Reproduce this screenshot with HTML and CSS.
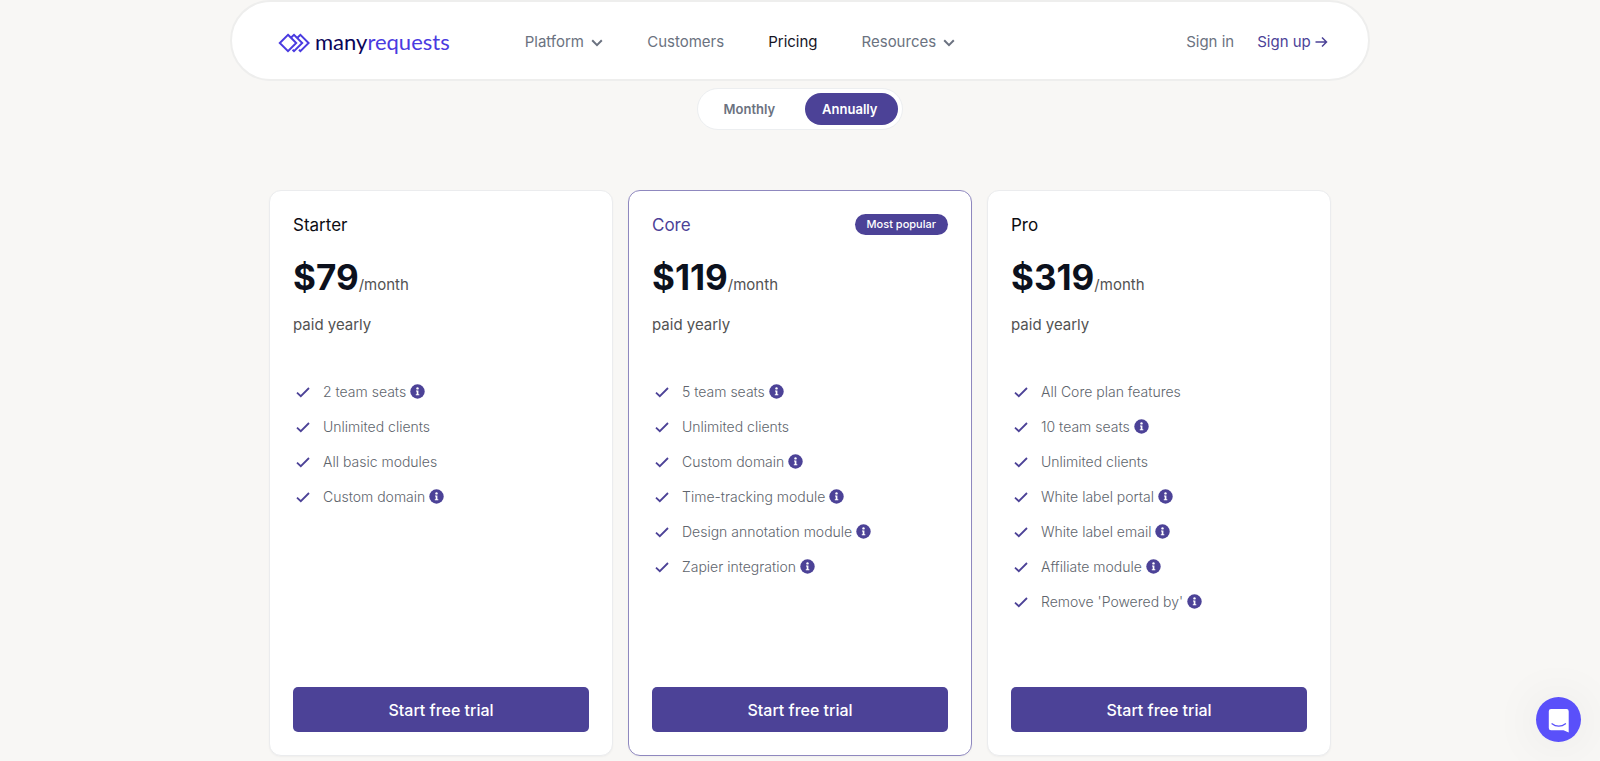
FILE: index.html
```html
<!DOCTYPE html>
<html lang="en">
<head>
    <meta charset="UTF-8">
    <meta name="viewport" content="width=device-width, initial-scale=1.0">
    <title>Pricing - ManyRequests</title>
    <link rel="stylesheet" href="styles.css">
</head>
<body>
    <!-- shared icons -->
    <svg class="sprite" aria-hidden="true">
        <symbol id="check" viewBox="0 0 14 14">
            <path d="M1 7.6 L4.8 11.2 L13 3" fill="none" stroke="#4c4297" stroke-width="1.8"/>
        </symbol>
        <symbol id="info" viewBox="0 0 15 15">
            <circle cx="7.5" cy="7.5" r="7.2" fill="#4c4297"/>
            <circle cx="7.5" cy="4.4" r="1.2" fill="#fff"/>
            <path d="M6 6.5H8.4V10.2H9.3V11.3H5.8V10.2H6.7V7.5H6Z" fill="#fff"/>
        </symbol>
        <symbol id="chevron" viewBox="0 0 12 8">
            <path d="M1.2 1.3 L6 6.1 L10.8 1.3" fill="none" stroke="#6b7280" stroke-width="2"/>
        </symbol>
    </svg>

    <header class="navbar">
        <a class="logo" href="#">
            <svg class="logo-mark" width="32" height="20" viewBox="0 0 32 20" fill="none" stroke="#4a3be0" stroke-width="2">
                <path d="M10 1.8 L18.2 10 L10 18.2 L1.8 10 Z"/>
                <path d="M12.9 4.7 L16 1.8 L24.2 10 L16 18.2 L14.6 16.8"/>
                <path d="M19.4 4.7 L22.4 1.8 L30.6 10 L22.4 18.2 L21 16.8"/>
            </svg>
            <span class="logo-text">many<span>requests</span></span>
        </a>
        <nav class="nav-links">
            <a href="#">Platform <svg width="12" height="8"><use href="#chevron"/></svg></a>
            <a href="#">Customers</a>
            <a class="current" href="#">Pricing</a>
            <a href="#">Resources <svg width="12" height="8"><use href="#chevron"/></svg></a>
        </nav>
        <div class="nav-account">
            <a href="#">Sign in</a>
            <a class="sign-up" href="#">Sign up
                <svg width="13" height="12" viewBox="0 0 13 12" fill="none" stroke="#4c4297" stroke-width="1.5"><path d="M0.5 6H11.5M7 1.5L11.5 6L7 10.5"/></svg>
            </a>
        </div>
    </header>

    <main>
        <div class="toggle">
            <input type="radio" name="billing" id="monthly">
            <label for="monthly">Monthly</label>
            <input type="radio" name="billing" id="annually" checked>
            <label for="annually">Annually</label>
        </div>

        <div class="plans">
            <section class="plan">
                <div class="plan-head"><h2>Starter</h2></div>
                <p class="price"><strong>$79</strong>/month</p>
                <p class="billed">paid yearly</p>
                <ul class="features">
                    <li><svg class="check"><use href="#check"/></svg>2 team seats<svg class="info"><use href="#info"/></svg></li>
                    <li><svg class="check"><use href="#check"/></svg>Unlimited clients</li>
                    <li><svg class="check"><use href="#check"/></svg>All basic modules</li>
                    <li><svg class="check"><use href="#check"/></svg>Custom domain<svg class="info"><use href="#info"/></svg></li>
                </ul>
                <button class="trial">Start free trial</button>
            </section>

            <section class="plan popular">
                <div class="plan-head"><h2>Core</h2><span class="badge">Most popular</span></div>
                <p class="price"><strong>$119</strong>/month</p>
                <p class="billed">paid yearly</p>
                <ul class="features">
                    <li><svg class="check"><use href="#check"/></svg>5 team seats<svg class="info"><use href="#info"/></svg></li>
                    <li><svg class="check"><use href="#check"/></svg>Unlimited clients</li>
                    <li><svg class="check"><use href="#check"/></svg>Custom domain<svg class="info"><use href="#info"/></svg></li>
                    <li><svg class="check"><use href="#check"/></svg>Time-tracking module<svg class="info"><use href="#info"/></svg></li>
                    <li><svg class="check"><use href="#check"/></svg>Design annotation module<svg class="info"><use href="#info"/></svg></li>
                    <li><svg class="check"><use href="#check"/></svg>Zapier integration<svg class="info"><use href="#info"/></svg></li>
                </ul>
                <button class="trial">Start free trial</button>
            </section>

            <section class="plan">
                <div class="plan-head"><h2>Pro</h2></div>
                <p class="price"><strong>$319</strong>/month</p>
                <p class="billed">paid yearly</p>
                <ul class="features">
                    <li><svg class="check"><use href="#check"/></svg>All Core plan features</li>
                    <li><svg class="check"><use href="#check"/></svg>10 team seats<svg class="info"><use href="#info"/></svg></li>
                    <li><svg class="check"><use href="#check"/></svg>Unlimited clients</li>
                    <li><svg class="check"><use href="#check"/></svg>White label portal<svg class="info"><use href="#info"/></svg></li>
                    <li><svg class="check"><use href="#check"/></svg>White label email<svg class="info"><use href="#info"/></svg></li>
                    <li><svg class="check"><use href="#check"/></svg>Affiliate module<svg class="info"><use href="#info"/></svg></li>
                    <li><svg class="check"><use href="#check"/></svg>Remove 'Powered by'<svg class="info"><use href="#info"/></svg></li>
                </ul>
                <button class="trial">Start free trial</button>
            </section>
        </div>
    </main>

    <button class="chat" aria-label="Open chat">
        <svg width="22" height="25" viewBox="0 0 22 25">
            <path d="M3 1H18.5A2.2 2.2 0 0 1 20.7 3.2V24.6L15.5 22.2H3A2.2 2.2 0 0 1 0.8 20V3.2A2.2 2.2 0 0 1 3 1Z" fill="#fff"/>
            <path d="M4 15.8C8 19 13.5 19 17.5 15.8" fill="none" stroke="#5a50fa" stroke-width="1.3" stroke-linecap="round"/>
        </svg>
    </button>
</body>
</html>
```
FILE: styles.css
```css
* {
    box-sizing: border-box;
}

body {
    margin: 0;
    background-color: #f8f7f5;
    font-family: Inter, "Liberation Sans", sans-serif;
    font-size: 15px;
    color: #525252;
}

a {
    color: inherit;
    text-decoration: none;
}

h2, p, ul {
    margin: 0;
    padding: 0;
}

.sprite {
    position: absolute;
    width: 0;
    height: 0;
}

/* navbar */
.navbar {
    display: flex;
    align-items: center;
    width: calc(100% - 40px);
    max-width: 1140px;
    height: 81px;
    margin: 0 auto;
    padding: 2px 40px 0 46px;
    background-color: #fff;
    border: 2px solid #eeeeed;
    border-radius: 41px;
    color: #6b7280;
}

.logo {
    display: flex;
    align-items: center;
    gap: 5px;
}

.logo-mark {
    margin-top: 3px;
}

.logo-text {
    font-family: Lato, sans-serif;
    font-size: 22px;
    line-height: 26px;
    color: #0b0558;
}

.logo-text span {
    color: #4a3be0;
}

.nav-links {
    display: flex;
    gap: 44px;
    margin-left: 75px;
}

.nav-links svg {
    margin-left: 3px;
}

.nav-links .current {
    color: #16141f;
}

.nav-account {
    display: flex;
    gap: 23px;
    margin-left: auto;
}

.nav-account svg {
    vertical-align: -1px;
}

.sign-up {
    color: #4c4297;
}

/* billing toggle */
.toggle {
    display: flex;
    width: fit-content;
    margin: 7px auto 0;
    padding: 4px;
    background-color: #fff;
    border: 1px solid #eceef0;
    border-radius: 21px;
}

.toggle input {
    position: absolute;
    opacity: 0;
}

.toggle label {
    padding: 0 30px 0 22px;
    border-radius: 16px;
    font-size: 13px;
    font-weight: 600;
    line-height: 32px;
    color: #6b7280;
    cursor: pointer;
}

.toggle input:checked + label {
    padding: 0 21px 0 17px;
    background-color: #4c4297;
    color: #fff;
}

/* plans */
.plans {
    display: grid;
    grid-template-columns: repeat(3, 1fr);
    gap: 15px;
    max-width: 1062px;
    margin: 60px auto 0;
    padding-bottom: 5px;
}

.plan {
    display: flex;
    flex-direction: column;
    padding: 23px;
    background-color: #fff;
    border: 1px solid #ebecee;
    border-radius: 12px;
    box-shadow: 0 1px 2px rgba(0, 0, 0, 0.04);
}

.plan.popular {
    border-color: #8f88bf;
}

.plan-head {
    display: flex;
    justify-content: space-between;
    align-items: center;
    height: 21px;
}

.plan-head h2 {
    font-size: 17px;
    font-weight: 400;
    color: #0d0d12;
}

.popular h2 {
    color: #4c4297;
}

.badge {
    padding: 0 12px;
    background-color: #4c4297;
    border-radius: 11px;
    font-size: 11px;
    font-weight: 500;
    line-height: 21px;
    color: #fff;
}

.price {
    margin-top: 22px;
    line-height: 40px;
}

.price strong {
    font-size: 35px;
    font-weight: 700;
    color: #0c111d;
}

.billed {
    margin-top: 8px;
    line-height: 24px;
}

.features {
    display: flex;
    flex-direction: column;
    flex-grow: 1;
    gap: 14px;
    margin-top: 44px;
    padding-bottom: 75px;
    list-style: none;
    font-size: 14px;
    font-weight: 300;
    line-height: 21px;
    color: #60656d;
}

.features li {
    display: flex;
    align-items: center;
}

.check {
    width: 14px;
    height: 14px;
    margin: 0 13px 0 3px;
}

.info {
    width: 15px;
    height: 15px;
    margin-left: 4px;
}

.trial {
    height: 45px;
    background-color: #4c4297;
    border: 0;
    border-radius: 5px;
    font-family: inherit;
    font-size: 16px;
    font-weight: 500;
    color: #fff;
    cursor: pointer;
}

/* chat launcher */
.chat {
    position: fixed;
    right: 19px;
    bottom: 19px;
    display: flex;
    align-items: center;
    justify-content: center;
    width: 45px;
    height: 45px;
    padding: 2px 0 0;
    background-color: #5a50fa;
    border: 0;
    border-radius: 50%;
    box-shadow: 0 2px 50px rgba(0, 0, 0, 0.08);
    cursor: pointer;
}
```
